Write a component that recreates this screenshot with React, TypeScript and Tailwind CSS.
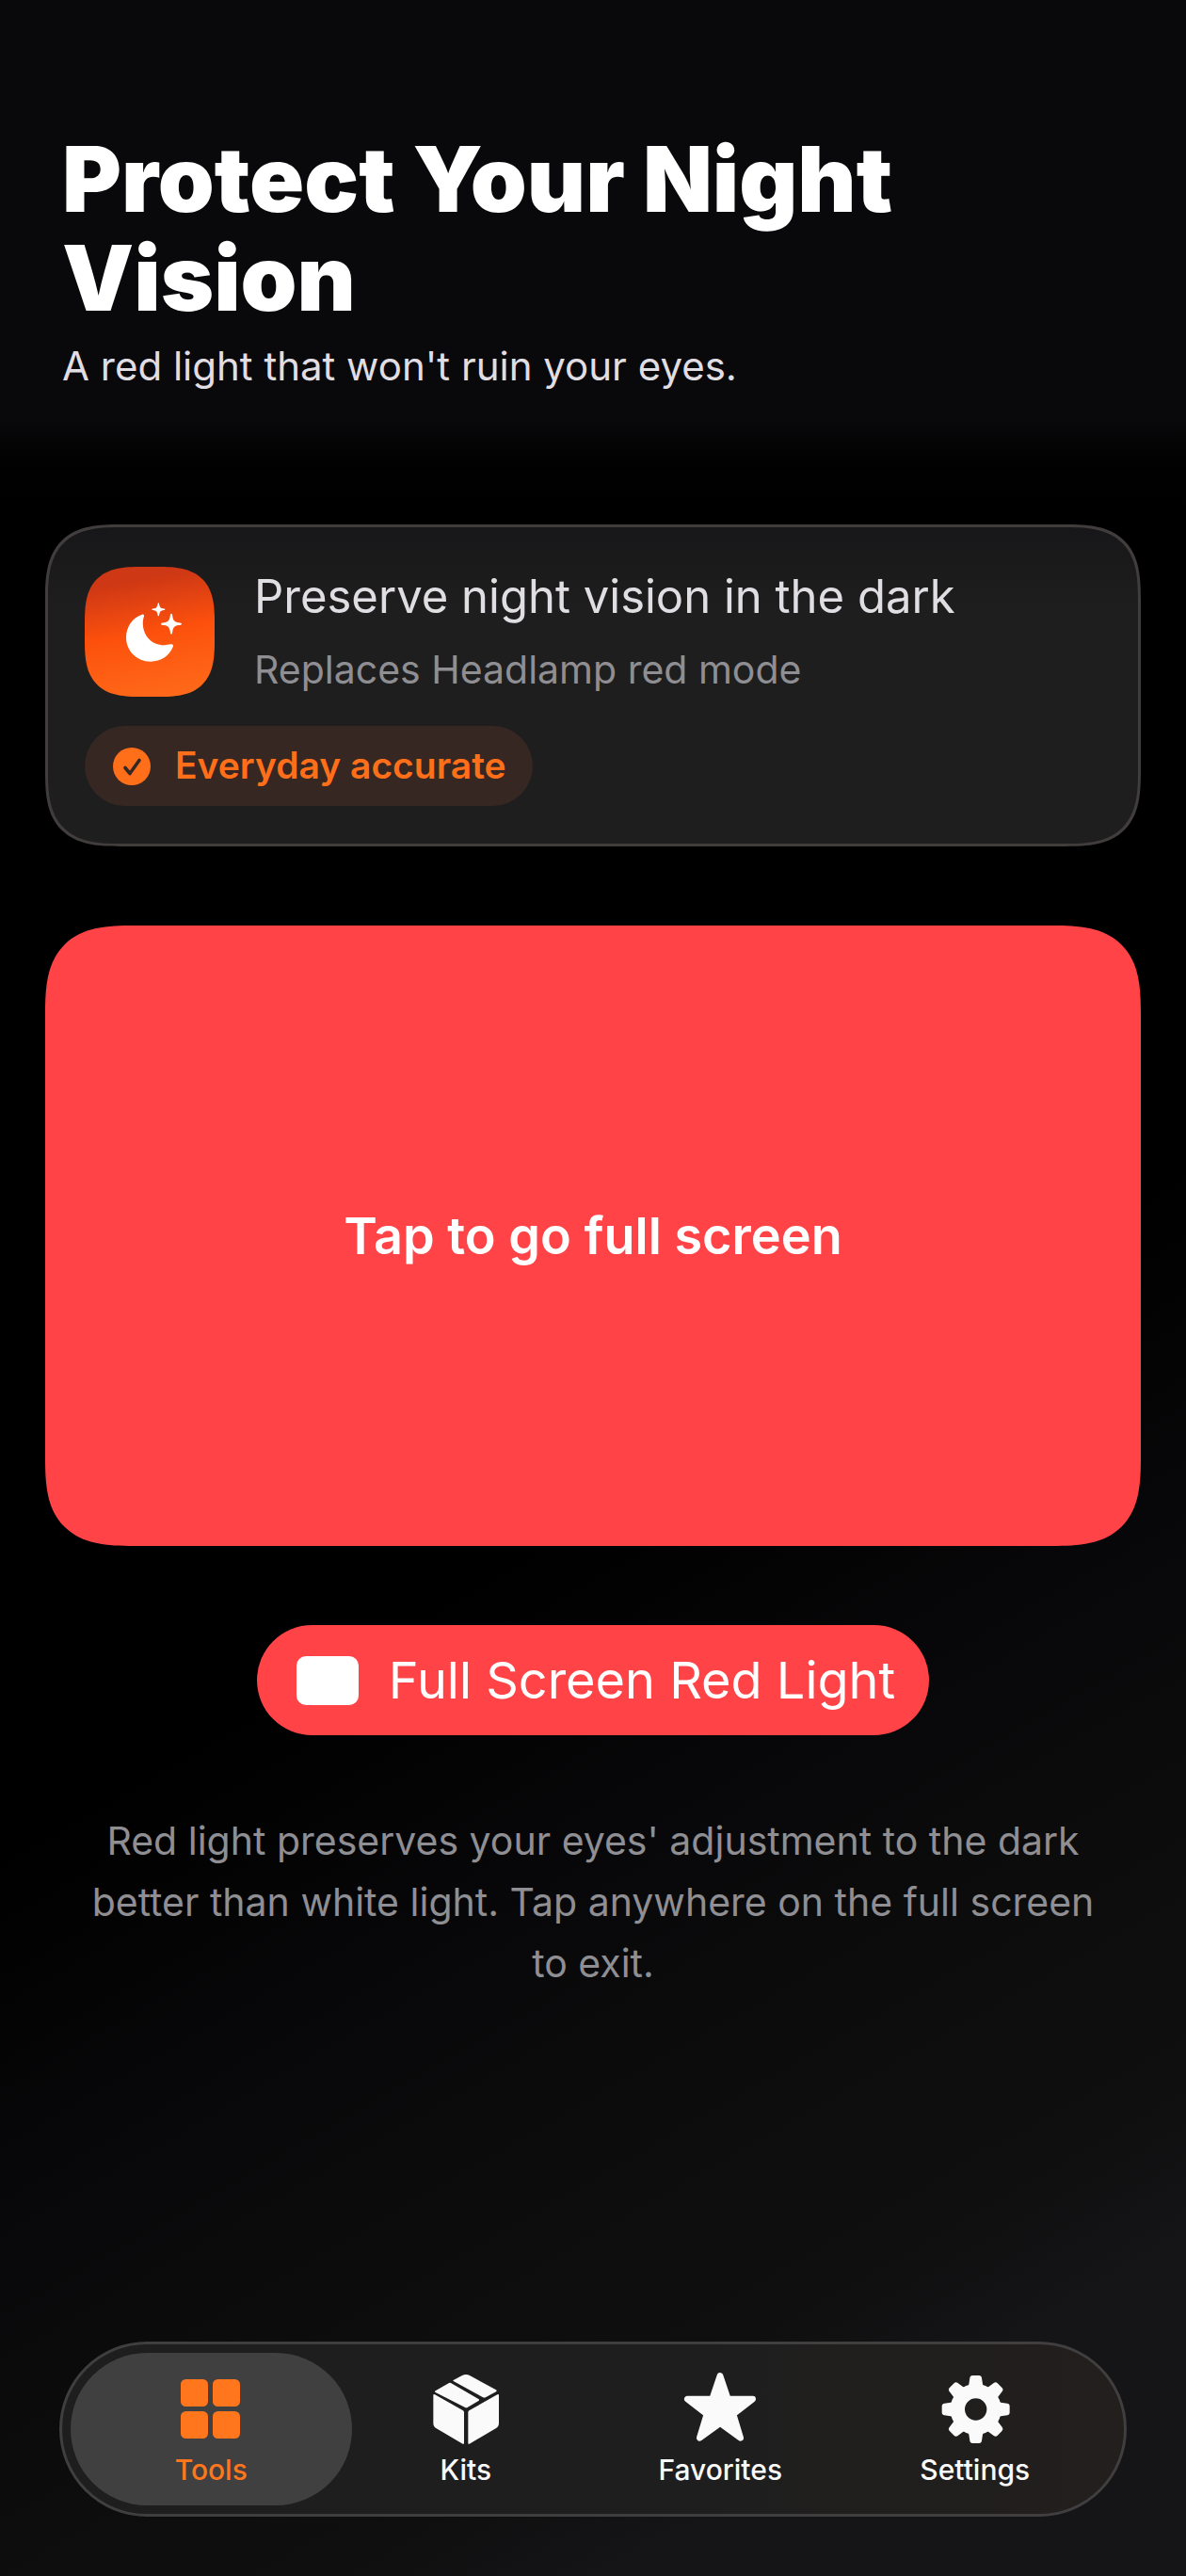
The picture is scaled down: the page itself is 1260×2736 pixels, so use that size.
import { useState, type ReactNode } from "react";
import clsx from "clsx";

function MoonStarsIcon() {
  return (
    <svg viewBox="0 0 180 192" className="h-16 w-[60px]" fill="currentColor" aria-hidden="true">
      <path d="M54 41c7-1 7 4 5 9-5 15-4 45 14 66 18 22 48 26 71 20 7-2 11 2 8 9-11 28-39 46-71 46-44 0-78-34-78-77 0-34 21-64 51-73Z" />
      <path d="M147 38c3 0 3 3 4 9 2 13 6 17 19 20 6 1 10 1 10 4s-4 3-10 4c-13 2-17 7-19 19-1 6-1 10-4 10s-3-4-4-10c-2-12-6-17-19-19-6-1-10-1-10-4s4-3 10-4c13-3 17-7 19-20 1-6 1-9 4-9Z" />
      <path d="M106 4c2 0 2 3 3 7 2 7 4 9 11 11 4 1 7 1 7 3s-3 2-7 3c-7 1-9 4-11 11-1 4-1 7-3 7s-2-3-3-7c-2-7-4-10-11-11-4-1-7-1-7-3s3-2 7-3c7-2 9-4 11-11 1-4 1-7 3-7Z" />
    </svg>
  );
}

function CheckBadgeIcon() {
  return (
    <svg viewBox="0 0 40 40" className="size-10" aria-hidden="true">
      <circle cx="20" cy="20" r="20" fill="#ff6f1a" />
      <path
        d="M13 21.5 18 27.5 28 13.5"
        fill="none"
        stroke="#362722"
        strokeWidth="3.6"
        strokeLinecap="round"
        strokeLinejoin="round"
      />
    </svg>
  );
}

function GridIcon() {
  return (
    <svg viewBox="0 0 100 100" className="size-[100px]" fill="currentColor" aria-hidden="true">
      <rect x="18" y="17" width="29" height="29" rx="5.5" />
      <rect x="52" y="17" width="29" height="29" rx="5.5" />
      <rect x="18" y="51" width="29" height="29" rx="5.5" />
      <rect x="52" y="51" width="29" height="29" rx="5.5" />
    </svg>
  );
}

function BoxIcon() {
  return (
    <svg viewBox="0 0 300 300" className="size-[100px]" fill="currentColor" aria-hidden="true">
      <path d="M53 88 96 63q3-2 6 0l88 51q5 3 0 6l-34 20q-5 3-10 0L53 93q-4-3 0-5Z" />
      <path d="m110 54 28-15q12-6 24 0l84 46q4 3 0 6l-32 17q-6 3-11 0L110 57q-2-2 0-3Z" />
      <path d="M46 102q0-5 5-2l90 51q3 2 3 5v98q0 5-4 3l-84-49q-10-6-10-17Z" />
      <path d="M255 102q0-5-5-2l-90 51q-3 2-3 5v98q0 5 4 3l84-49q10-6 10-17Z" />
    </svg>
  );
}

function StarIcon() {
  return (
    <svg viewBox="0 0 300 300" className="size-[100px]" fill="currentColor" aria-hidden="true">
      <path
        d="m150 40 25 74h79l-62 48 23 76-65-47-65 47 23-76-62-48h79Z"
        stroke="currentColor"
        strokeWidth="20"
        strokeLinejoin="round"
      />
    </svg>
  );
}

const toothAngles = [0, 45, 90, 135];

function GearIcon() {
  return (
    <svg viewBox="0 0 300 300" className="size-[100px]" fill="currentColor" aria-hidden="true">
      <circle cx="152" cy="147" r="58" fill="none" stroke="currentColor" strokeWidth="46" />
      {toothAngles.map((angle) => (
        <g key={angle} transform={`rotate(${angle} 152 147)`}>
          <path d="M124 76q5-2 6-9l3-20q1-8 9-8h20q8 0 9 8l3 20q1 7 6 9Z" />
          <path d="M124 218q5 2 6 9l3 20q1 8 9 8h20q8 0 9-8l3-20q1-7 6-9Z" />
        </g>
      ))}
    </svg>
  );
}

type Tab = { id: string; label: string; icon: ReactNode };

const tabs: Tab[] = [
  { id: "tools", label: "Tools", icon: <GridIcon /> },
  { id: "kits", label: "Kits", icon: <BoxIcon /> },
  { id: "favorites", label: "Favorites", icon: <StarIcon /> },
  { id: "settings", label: "Settings", icon: <GearIcon /> },
];

function TabBar() {
  const [active, setActive] = useState("tools");

  return (
    <nav className="mx-[63px] mt-auto flex rounded-full border-3 border-[#403e3e] bg-linear-to-r from-[#1e1e1e] from-60% to-[#221f1d] px-[23px] py-[9px]">
      {tabs.map((tab) => (
        <button
          key={tab.id}
          type="button"
          aria-current={active === tab.id ? "page" : undefined}
          onClick={() => setActive(tab.id)}
          className={clsx(
            "-mx-[14px] flex h-[162px] flex-1 flex-col items-center rounded-full pt-[11px] text-[30px] font-medium",
            active === tab.id ? "bg-[#404040] text-[#ff761d]" : "text-[#fafafa]"
          )}
        >
          {tab.icon}
          <span className="-mt-[6px] leading-[38px]">{tab.label}</span>
        </button>
      ))}
    </nav>
  );
}

function InfoCard() {
  return (
    <section className="rounded-[80px] border-3 border-[#403d3c] bg-linear-to-b from-[#171719] to-[#1e1e1e] to-25% px-[39px] pt-[42px] pb-10 [corner-shape:superellipse(1.5)]">
      <div className="flex items-center gap-[42px]">
        <div className="flex size-[138px] shrink-0 items-center justify-center rounded-[60px] bg-linear-170 from-[#cf3814] from-15% via-[#fc500c] via-50% to-[#ff6c1a] pl-2 text-white [corner-shape:superellipse(1.5)]">
          <MoonStarsIcon />
        </div>
        <div>
          <h2 className="text-[49px] leading-[64px] text-[#e0dee2]">
            Preserve night vision in the dark
          </h2>
          <p className="mt-4 text-[41px] leading-[58px] text-[#8e8e93]">
            Replaces Headlamp red mode
          </p>
        </div>
      </div>
      <div className="mt-[31px] inline-flex h-[85px] items-center gap-[26px] rounded-full bg-[#362722] pr-7 pl-[30px] text-[39px] font-semibold text-[#ff6f1a]">
        <CheckBadgeIcon />
        <span>Everyday accurate</span>
      </div>
    </section>
  );
}

function App() {
  const [fullScreen, setFullScreen] = useState(false);

  if (fullScreen) {
    return (
      <button
        type="button"
        aria-label="Exit full screen"
        className="block min-h-screen w-full bg-[#ff4346]"
        onClick={() => setFullScreen(false)}
      />
    );
  }

  return (
    <div className="flex min-h-screen flex-col bg-[linear-gradient(150deg,#000_57%,#08080a_68%,#0d0d0d_78%,#0f0f10_85%,#151517_90%)] pb-[63px] font-[Inter,sans-serif]">
      <header className="bg-linear-to-b from-[#09090b] from-80% to-black px-[66px] pt-[138px] pb-[135px]">
        <h1 className="text-[96px] leading-[105px] font-black text-white">
          Protect Your Night Vision
        </h1>
        <p className="mt-2 text-[42px] leading-[66px] text-[#e0dee2]">
          A red light that won't ruin your eyes.
        </p>
      </header>

      <main className="flex flex-col gap-[84px] px-12">
        <InfoCard />

        <button
          type="button"
          className="h-[659px] w-full rounded-[94px] bg-[#ff4346] text-[54px] font-semibold text-white [corner-shape:superellipse(1.5)]"
          onClick={() => setFullScreen(true)}
        >
          Tap to go full screen
        </button>

        <button
          type="button"
          className="flex h-[117px] items-center gap-8 self-center rounded-full bg-[#ff4346] pr-9 pl-[42px] text-[54px] text-white"
          onClick={() => setFullScreen(true)}
        >
          <span className="h-[52px] w-[66px] rounded-[10px] bg-white" />
          Full Screen Red Light
        </button>

        <p className="-mt-1 px-10 text-center text-[41px] leading-[65px] text-[#8e8e93]">
          Red light preserves your eyes' adjustment to the dark better than
          white light. Tap anywhere on the full screen to exit.
        </p>
      </main>

      <TabBar />
    </div>
  );
}

export default App;
